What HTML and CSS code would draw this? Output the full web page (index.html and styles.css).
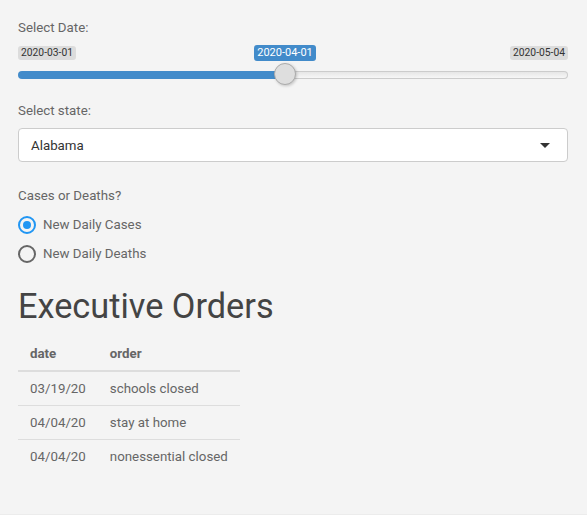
FILE: index.html
```html
<!DOCTYPE html>
<html>
<head>
<meta charset="utf-8">
<link rel="stylesheet" href="styles.css">
</head>
<body>
<div class="well">
  <div class="group group-slider">
    <div class="label">Select Date:</div>
    <div class="slider">
      <div class="ticks">
        <span class="tick">2020-03-01</span>
        <span class="tick">2020-05-04</span>
      </div>
      <div class="track">
        <div class="fill" style="width:267px"></div>
        <div class="rest"></div>
        <div class="handle" style="left:256px"></div>
        <div class="value" style="left:236px">2020-04-01</div>
      </div>
    </div>
  </div>

  <div class="group group-select">
    <div class="label">Select state:</div>
    <div class="select">
      <span>Alabama</span>
      <span class="caret"></span>
    </div>
  </div>

  <div class="group group-radio">
    <div class="label">Cases or Deaths?</div>
    <div class="radio"><span class="circle checked"></span><span>New Daily Cases</span></div>
    <div class="radio"><span class="circle"></span><span>New Daily Deaths</span></div>
  </div>

  <h3 class="title">Executive Orders</h3>
  <table class="orders">
    <thead><tr><th>date</th><th>order</th></tr></thead>
    <tbody>
      <tr><td>03/19/20</td><td>schools closed</td></tr>
      <tr><td>04/04/20</td><td>stay at home</td></tr>
      <tr><td>04/04/20</td><td>nonessential closed</td></tr>
    </tbody>
  </table>
</div>
</body>
</html>
```

FILE: styles.css
```css
html, body {
  margin: 0;
  padding: 0;
  background: #ffffff;
}
body {
  font-family: Roboto, "Liberation Sans", sans-serif;
  font-size: 13.3px;
  color: #666666;
}
.well {
  box-sizing: border-box;
  height: 515px;
  background: #f4f4f4;
  padding: 16px 19px 0 18px;
  border-bottom: 1px solid #ececec;
}
.label {
  line-height: 24px;
  height: 24px;
}
.group-slider .slider {
  margin-top: 4px;
  height: 47px;
}
.ticks {
  display: flex;
  justify-content: space-between;
  padding-top: 2px;
  height: 14px;
}
.tick {
  font-size: 10.3px;
  line-height: 12px;
  padding: 1px 3px;
  background: #dcdcdc;
  color: #333;
  border-radius: 3px;
}
.track {
  position: relative;
  display: flex;
  margin-top: 11px;
  height: 8px;
}
.fill {
  height: 8px;
  background: #428bca;
  border-radius: 8px 0 0 8px;
}
.rest {
  flex: 1;
  box-sizing: border-box;
  height: 8px;
  border: 1px solid #cccccc;
  border-left: none;
  border-radius: 0 8px 8px 0;
  background: linear-gradient(to bottom, #dedede -50%, #ffffff 150%);
}
.handle {
  position: absolute;
  top: -8px;
  width: 20px;
  height: 20px;
  border: 1px solid #ababab;
  background: #dedede;
  border-radius: 50%;
  box-shadow: 1px 1px 3px rgba(0,0,0,0.2);
}
.value {
  position: absolute;
  top: -26px;
  font-size: 11px;
  line-height: 14px;
  padding: 1px 3px;
  width: 56px;
  text-align: center;
  color: #ffffff;
  background: #428bca;
  border-radius: 3px;
}
.group-select {
  margin-top: 8px;
}
.select {
  box-sizing: border-box;
  margin-top: 5px;
  height: 34px;
  background: #ffffff;
  border: 1px solid #cccccc;
  border-radius: 4px;
  padding: 0 17px 0 12px;
  display: flex;
  align-items: center;
  justify-content: space-between;
  color: #333333;
}
.caret {
  width: 0;
  height: 0;
  border-left: 5px solid transparent;
  border-right: 5px solid transparent;
  border-top: 5px solid #333333;
}
.group-radio {
  margin-top: 22px;
}
.radio {
  display: flex;
  align-items: center;
  gap: 7px;
  height: 29px;
}
.group-radio .label {
  margin-bottom: 2px;
}
.circle {
  box-sizing: border-box;
  width: 18px;
  height: 18px;
  border: 2px solid #666666;
  border-radius: 50%;
  position: relative;
}
.circle.checked {
  border-color: #2196f3;
}
.circle.checked::after {
  content: "";
  position: absolute;
  left: 3px;
  top: 3px;
  width: 8px;
  height: 8px;
  border-radius: 50%;
  background: #2196f3;
}
.title {
  margin: 20px 0 12px 0;
  font-size: 34.3px;
  font-weight: 400;
  line-height: 37px;
  color: #444444;
}
.orders {
  border-collapse: collapse;
}
.orders th, .orders td {
  text-align: left;
  padding: 8px 12px;
  line-height: 17px;
  vertical-align: top;
}
.orders th {
  font-weight: 700;
  border-bottom: 2px solid #dddddd;
}
.orders tbody tr + tr td {
  border-top: 1px solid #dddddd;
}
```
